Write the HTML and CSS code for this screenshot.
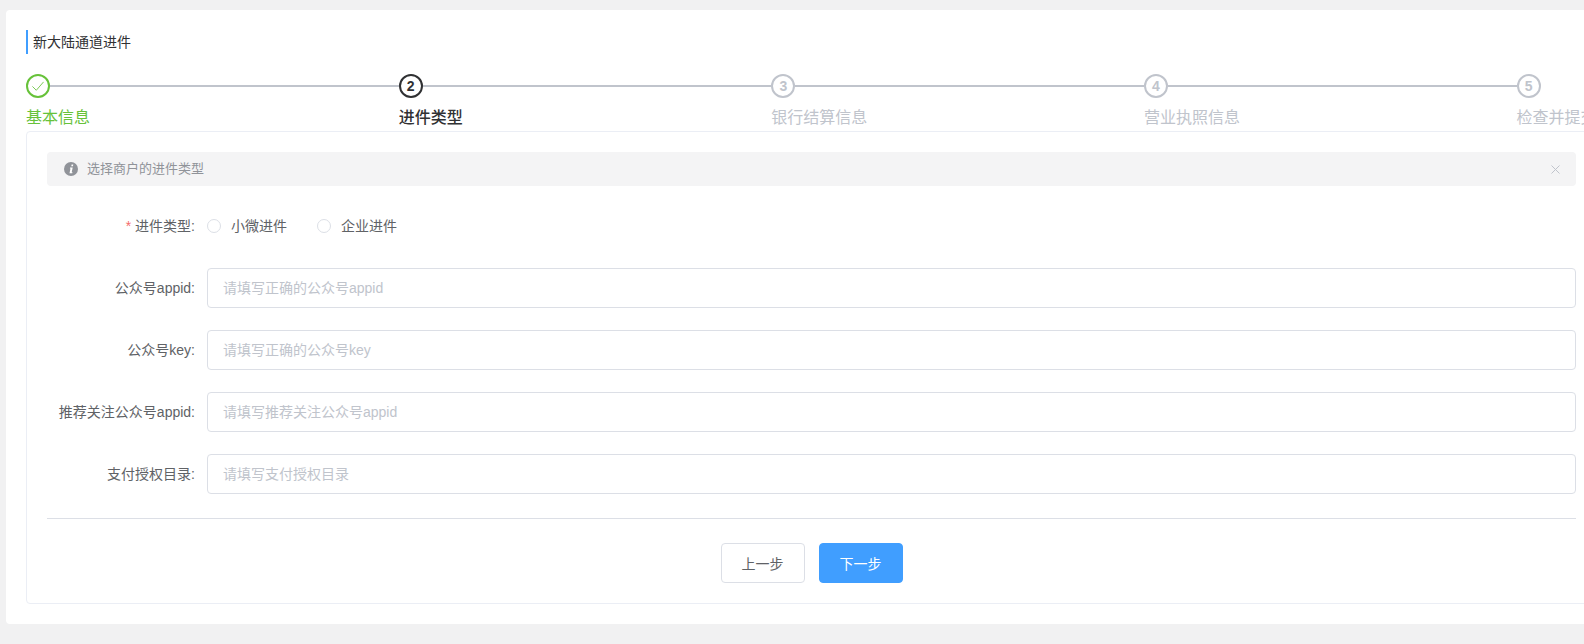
FILE: index.html
```html
<!DOCTYPE html>
<html lang="zh-CN">
<head>
<meta charset="utf-8">
<title>新大陆通道进件</title>
<link rel="stylesheet" href="styles.css">
</head>
<body>
<main class="card">
  <h1 class="title">新大陆通道进件</h1>
  <ol class="steps">
    <li class="step done">
      <div class="step-head"><span class="dot"><svg class="check" viewBox="0 0 14 14" width="12" height="12"><path d="M0.5 7.5 L5 12 L13.5 2.2" fill="none" stroke="currentColor" stroke-width="1"/></svg></span><span class="line"></span></div>
      <div class="step-title">基本信息</div>
    </li>
    <li class="step active">
      <div class="step-head"><span class="dot">2</span><span class="line"></span></div>
      <div class="step-title">进件类型</div>
    </li>
    <li class="step">
      <div class="step-head"><span class="dot">3</span><span class="line"></span></div>
      <div class="step-title">银行结算信息</div>
    </li>
    <li class="step">
      <div class="step-head"><span class="dot">4</span><span class="line"></span></div>
      <div class="step-title">营业执照信息</div>
    </li>
    <li class="step">
      <div class="step-head"><span class="dot">5</span></div>
      <div class="step-title">检查并提交</div>
    </li>
  </ol>
  <section class="panel">
    <div class="alert">
      <svg class="alert-icon" viewBox="0 0 14 14" width="14" height="14"><circle cx="7" cy="7" r="7" fill="#909399"/><path d="M7.6 2.6h1.7l-.35 1.6H7.25zM6.1 5.6h2.6L7.7 10.2h.8l-.2 1H5.5L6.5 6.6h-.6z" fill="#fff"/></svg>
      <span class="alert-text">选择商户的进件类型</span>
      <svg class="alert-close" viewBox="0 0 9 9" width="9" height="9"><path d="M.5.5l8 8M8.5.5l-8 8" stroke="#c0c4cc" stroke-width="1" fill="none"/></svg>
    </div>
    <form class="form">
      <div class="row row-radio">
        <label class="label"><span class="req">*</span> 进件类型:</label>
        <div class="radios">
          <span class="radio"><i class="radio-dot"></i><span class="radio-text">小微进件</span></span>
          <span class="radio"><i class="radio-dot"></i><span class="radio-text">企业进件</span></span>
        </div>
      </div>
      <div class="row"><label class="label">公众号appid:</label><input class="input" placeholder="请填写正确的公众号appid"></div>
      <div class="row"><label class="label">公众号key:</label><input class="input" placeholder="请填写正确的公众号key"></div>
      <div class="row"><label class="label">推荐关注公众号appid:</label><input class="input" placeholder="请填写推荐关注公众号appid"></div>
      <div class="row"><label class="label">支付授权目录:</label><input class="input" placeholder="请填写支付授权目录"></div>
    </form>
    <div class="actions">
      <button class="btn" type="button">上一步</button>
      <button class="btn primary" type="button">下一步</button>
    </div>
  </section>
</main>
</body>
</html>
```
FILE: styles.css
```css
* { box-sizing: border-box; }
html, body { margin: 0; height: 644px; overflow: hidden; }
body {
  background: #f1f1f2;
  padding: 10px 0 0 6px;
  font-family: "Liberation Sans", "Noto Sans CJK SC", sans-serif;
  font-size: 14px;
  color: #606266;
}
.card {
  width: 1611px;
  height: 614px;
  background: #fff;
  border-radius: 4px;
  padding: 20px;
}
.title {
  margin: 0 0 20px;
  height: 24px;
  border-left: 2px solid #409eff;
  padding-left: 5px;
  font-size: 14px;
  font-weight: 400;
  line-height: 24px;
  color: #303133;
}
.steps {
  list-style: none;
  margin: 0;
  padding: 0;
  display: flex;
  height: 57px;
}
.step { flex: 0 0 372.65px; color: #c0c4cc; }
.step-head { display: flex; align-items: center; height: 24px; }
.dot {
  flex: none;
  width: 24px;
  height: 24px;
  border: 2px solid #c0c4cc;
  border-radius: 50%;
  display: flex;
  align-items: center;
  justify-content: center;
  font-size: 14px;
  font-weight: 700;
  line-height: 1;
}
.line { flex: 1; height: 2px; background: #c0c4cc; }
.step-title { margin-top: 8px; font-size: 16px; line-height: 24px; white-space: nowrap; }
.done { color: #67c23a; }
.done .dot { border-color: #67c23a; }
.check { color: #67c23a; }
.active { color: #303133; }
.active .dot { border-color: #303133; }
.active .step-title { font-weight: 500; }
.panel {
  height: 473px;
  border: 1px solid #ebeef5;
  border-radius: 4px;
  padding: 20px;
}
.alert {
  height: 34px;
  background: #f4f4f5;
  border-radius: 4px;
  display: flex;
  align-items: center;
  padding: 0 16px 0 17px;
}
.alert-icon { flex: none; }
.alert-text { margin-left: 9px; font-size: 13px; line-height: 30px; color: #909399; }
.alert-close { margin-left: auto; }
.form { display: flex; flex-direction: column; gap: 22px; margin-top: 26px; padding-bottom: 24px; border-bottom: 1px solid #dcdfe6; }
.row { display: flex; align-items: center; height: 40px; }
.row-radio { height: 26px; margin-bottom: 8px; }
.label { flex: 0 0 148px; text-align: right; line-height: 1; padding-top: 1px; }
.row:not(.row-radio) .label { padding-top: 0; }
.req { color: #f56c6c; }
.radios { display: flex; margin-left: 12px; }
.radio { display: flex; align-items: center; width: 110px; }
.radio-dot {
  width: 14px;
  height: 14px;
  border: 1px solid #dcdfe6;
  border-radius: 50%;
  margin-right: 10px;
  margin-top: 2px;
}
.input {
  flex: 1;
  margin-left: 12px;
  height: 40px;
  border: 1px solid #dcdfe6;
  border-radius: 4px;
  padding: 0 15px;
  font: inherit;
  color: #606266;
  outline: none;
}
.input::placeholder { color: #c0c4cc; opacity: 1; }
.actions { display: flex; justify-content: center; gap: 14px; margin-top: 24px; }
.btn {
  width: 84px;
  height: 40px;
  border: 1px solid #dcdfe6;
  border-radius: 4px;
  background: #fff;
  font: inherit;
  color: #606266;
  padding: 0;
}
.primary { background: #409eff; border-color: #409eff; color: #fff; }
```
